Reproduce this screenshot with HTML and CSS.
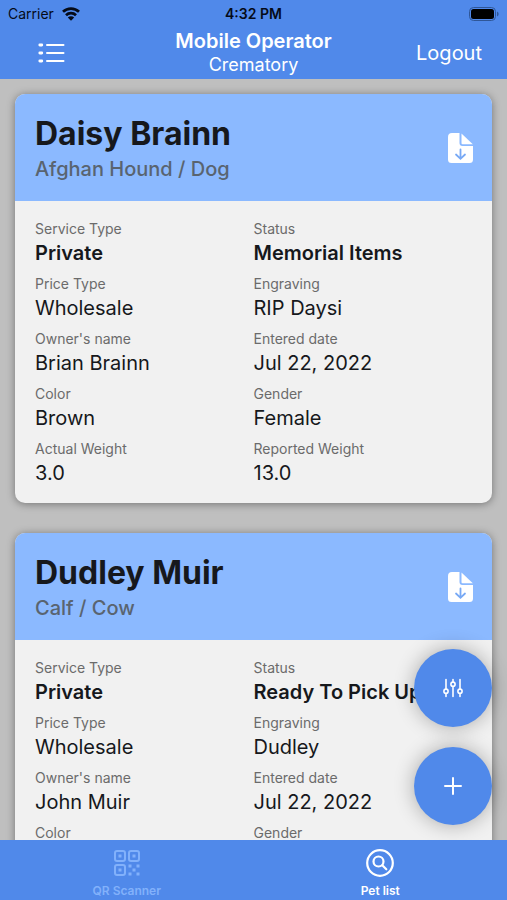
FILE: index.html
```html
<!DOCTYPE html>
<html lang="en">

<head>
    <meta charset="UTF-8">
    <meta name="viewport" content="width=device-width, initial-scale=1.0">
    <title>Mobile Operator</title>
    <link rel="stylesheet" href="styles.css">
</head>

<body>
    <!-- Shared icon -->
    <svg class="sprite" aria-hidden="true">
        <symbol id="file-download" viewBox="0 0 26 30">
            <path fill="currentColor" d="M4 0h7.500v10a3 3 0 0 0 3 3H25v13.500a3.500 3.500 0 0 1-3.500 3.500h-18A3.500 3.500 0 0 1 0 26.500V4a4 4 0 0 1 4-4z" />
            <path fill="currentColor" d="M13.500 0.500L24.800 11.300H14.500a1 1 0 0 1-1-1z" />
            <path class="arrow" d="M12.500 16.500v9M8 21.500l4.500 4.300 4.500-4.300" />
        </symbol>
    </svg>

    <header class="top">
        <div class="status-bar">
            <div class="carrier">
                <span>Carrier</span>
                <svg width="18" height="14" viewBox="0 0 18 14" fill="none" stroke="#050b18" stroke-width="2.700">
                    <path d="M1 4.800a11.500 11.500 0 0 1 16 0M4 8.200a7.200 7.200 0 0 1 10 0" />
                    <path fill="#050b18" stroke="none" d="M9 13.800L5.800 10.600a4.600 4.600 0 0 1 6.400 0z" />
                </svg>
            </div>
            <span class="time">4:32 PM</span>
            <svg class="battery" width="30" height="14" viewBox="0 0 30 14">
                <rect x="0.500" y="0.500" width="26" height="13" rx="4" fill="none" stroke="#2f5697" />
                <rect x="2" y="2" width="23" height="10" rx="2.500" fill="#000" />
                <path d="M28 4.500a2.700 2.700 0 0 1 0 5z" fill="#2f5697" />
            </svg>
        </div>
        <div class="nav-bar">
            <button class="menu-button" aria-label="Menu">
                <svg width="28" height="20" viewBox="0 0 28 20" fill="none" stroke="#fff" stroke-width="2" stroke-linecap="round">
                    <path d="M10 2h16.500M10 10h16.500M10 18h16.500" />
                    <path stroke-width="2.800" d="M2.800 2h2M2.800 10h2M2.800 18h2" />
                </svg>
            </button>
            <div class="title">
                <h1>Mobile Operator</h1>
                <p>Crematory</p>
            </div>
            <button class="logout">Logout</button>
        </div>
    </header>

    <main class="pets">
        <article class="card">
            <div class="card-header">
                <div>
                    <h2>Daisy Brainn</h2>
                    <p>Afghan Hound / Dog</p>
                </div>
                <button class="download" aria-label="Download">
                    <svg width="26" height="30"><use href="#file-download" /></svg>
                </button>
            </div>
            <dl class="details">
                <div class="strong"><dt>Service Type</dt><dd>Private</dd></div>
                <div class="strong"><dt>Status</dt><dd>Memorial Items</dd></div>
                <div><dt>Price Type</dt><dd>Wholesale</dd></div>
                <div><dt>Engraving</dt><dd>RIP Daysi</dd></div>
                <div><dt>Owner's name</dt><dd>Brian Brainn</dd></div>
                <div><dt>Entered date</dt><dd>Jul 22, 2022</dd></div>
                <div><dt>Color</dt><dd>Brown</dd></div>
                <div><dt>Gender</dt><dd>Female</dd></div>
                <div><dt>Actual Weight</dt><dd>3.0</dd></div>
                <div><dt>Reported Weight</dt><dd>13.0</dd></div>
            </dl>
        </article>

        <article class="card">
            <div class="card-header">
                <div>
                    <h2>Dudley Muir</h2>
                    <p>Calf / Cow</p>
                </div>
                <button class="download" aria-label="Download">
                    <svg width="26" height="30"><use href="#file-download" /></svg>
                </button>
            </div>
            <dl class="details">
                <div class="strong"><dt>Service Type</dt><dd>Private</dd></div>
                <div class="strong"><dt>Status</dt><dd>Ready To Pick Up</dd></div>
                <div><dt>Price Type</dt><dd>Wholesale</dd></div>
                <div><dt>Engraving</dt><dd>Dudley</dd></div>
                <div><dt>Owner's name</dt><dd>John Muir</dd></div>
                <div><dt>Entered date</dt><dd>Jul 22, 2022</dd></div>
                <div><dt>Color</dt><dd></dd></div>
                <div><dt>Gender</dt><dd></dd></div>
            </dl>
        </article>
    </main>

    <footer class="bottom">
        <!-- Floating buttons -->
        <div class="actions">
            <button class="fab" aria-label="Filter">
                <svg width="20" height="20" viewBox="0 0 20 20" fill="none" stroke="#fff" stroke-width="1.600" stroke-linecap="round">
                    <path d="M3 1.500v9.500M3 15.500v3M10 1.500v2.500M10 8.500v10M17 1.500v9.500M17 15.500v3" />
                    <circle cx="3" cy="13.200" r="2.100" />
                    <circle cx="10" cy="6.200" r="2.100" />
                    <circle cx="17" cy="13.200" r="2.100" />
                </svg>
            </button>
            <button class="fab" aria-label="Add">
                <svg width="18" height="18" viewBox="0 0 18 18" fill="none" stroke="#fff" stroke-width="2" stroke-linecap="round">
                    <path d="M9 1v16M1 9h16" />
                </svg>
            </button>
        </div>
        <nav class="tabs">
            <a href="#scanner" class="tab">
                <svg width="28" height="28" viewBox="0 0 28 28" fill="none" stroke="currentColor" stroke-width="2">
                    <rect x="2" y="2" width="10" height="10" rx="2" />
                    <rect x="16" y="2" width="10" height="10" rx="2" />
                    <rect x="2" y="16" width="10" height="10" rx="2" />
                    <path fill="currentColor" stroke="none" d="M5.500 5.500h3v3h-3zM19.500 5.500h3v3h-3zM5.500 19.500h3v3h-3zM19.500 19.500h3v3h-3zM15.500 15.500h3v3h-3zM23.500 15.500h3v3h-3zM15.500 23.500h3v3h-3zM23.500 23.500h3v3h-3z" />
                </svg>
                <span>QR Scanner</span>
            </a>
            <a href="#pets" class="tab active">
                <svg width="28" height="28" viewBox="0 0 28 28" fill="none" stroke="currentColor" stroke-width="2.200" stroke-linecap="round">
                    <circle cx="14" cy="14" r="12.800" />
                    <circle cx="12.500" cy="12.500" r="5" />
                    <path d="M16.300 16.300l4 4" />
                </svg>
                <span>Pet list</span>
            </a>
        </nav>
    </footer>
</body>

</html>
```
FILE: styles.css
```css
* {
    box-sizing: border-box;
}

body {
    font-family: Inter, "Liberation Sans", sans-serif;
    margin: 0;
    height: 100vh;
    display: flex;
    flex-direction: column;
    background-color: #bfbfbf;
    color: #16181c;
    overflow: hidden;
}

h1,
h2,
p,
dl,
dd {
    margin: 0;
}

button {
    font-family: inherit;
    border: none;
    background: none;
    padding: 0;
    cursor: pointer;
}

svg {
    display: block;
}

.sprite {
    position: absolute;
    width: 0;
    height: 0;
}

/* Header */
.top {
    flex: none;
    background-color: #5089ea;
    color: #fff;
}

.status-bar {
    display: grid;
    grid-template-columns: 1fr auto 1fr;
    align-items: center;
    height: 27px;
    padding: 0 8px;
    color: #050b18;
    font-size: 14px;
}

.carrier {
    display: flex;
    align-items: center;
    gap: 8px;
}

.time {
    font-weight: 600;
}

.battery {
    justify-self: end;
}

.nav-bar {
    display: grid;
    grid-template-columns: 1fr auto 1fr;
    align-items: center;
    height: 52px;
    padding: 0 25px 0 37px;
}

.menu-button {
    justify-self: start;
}

.title {
    text-align: center;
    margin-left: -12px;
}

.title h1 {
    font-size: 20px;
    line-height: 24px;
    font-weight: 600;
}

.title p {
    font-size: 18px;
    line-height: 24px;
}

.logout {
    justify-self: end;
    color: #fff;
    font-size: 20px;
}

/* Cards */
.pets {
    flex: 1;
    min-height: 0;
    overflow: hidden;
    display: flex;
    flex-direction: column;
    gap: 30px;
    padding: 15px;
}

.card {
    flex: none;
    border-radius: 10px;
    background-color: #f1f1f1;
    box-shadow: 0 1px 8px rgba(0, 0, 0, 0.4);
}

.card-header {
    display: flex;
    justify-content: space-between;
    align-items: flex-start;
    padding: 19px 18px 17px 20px;
    border-radius: 10px 10px 0 0;
    background-color: #8bb9ff;
}

.card-header h2 {
    font-size: 32px;
    line-height: 42px;
    font-weight: 700;
}

.card-header p {
    color: #596470;
    font-size: 20px;
    line-height: 29px;
    font-weight: 500;
}

.download {
    margin-top: 20px;
    color: #fff;
}

.arrow {
    fill: none;
    stroke: #78a9f5;
    stroke-width: 1.8;
    stroke-linecap: round;
}

.details {
    display: grid;
    grid-template-columns: 1fr 1fr;
    row-gap: 6px;
    padding: 17px 20px 16px;
}

.details dt {
    color: #6b6b6b;
    font-size: 14px;
    line-height: 21px;
}

.details dd {
    font-size: 20px;
    line-height: 28px;
    white-space: nowrap;
}

.details .strong dd {
    font-weight: 600;
}

/* Bottom bar */
.bottom {
    flex: none;
    position: relative;
}

.actions {
    position: absolute;
    right: 15px;
    bottom: 75px;
    display: flex;
    flex-direction: column;
    gap: 20px;
}

.fab {
    display: flex;
    align-items: center;
    justify-content: center;
    width: 78px;
    height: 78px;
    border-radius: 50%;
    background-color: #5089ea;
    box-shadow: 0 0 20px rgba(0, 0, 0, 0.3);
}

.tabs {
    position: relative;
    display: grid;
    grid-template-columns: 1fr 1fr;
    height: 60px;
    background-color: #5089ea;
}

.tab {
    display: flex;
    flex-direction: column;
    align-items: center;
    gap: 6px;
    padding-top: 9px;
    color: #82b1fb;
    font-size: 12px;
    line-height: 16px;
    font-weight: 600;
    text-decoration: none;
}

.tab.active {
    color: #fff;
}
```
